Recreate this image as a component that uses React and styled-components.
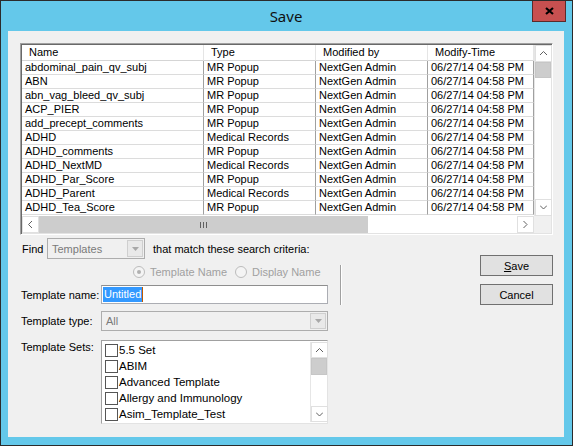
import { Fragment } from 'react';
import styled, { createGlobalStyle } from 'styled-components';

const GlobalStyle = createGlobalStyle`
  html, body {
    margin: 0;
    padding: 0;
    overflow: hidden;
    background: #fff;
  }
  * {
    box-sizing: border-box;
  }
`;

const Window = styled.div`
  width: 573px;
  height: 446px;
  border: 1px solid #2b2b2b;
  background: #64c8ea;
  display: flex;
  flex-direction: column;
  padding: 0 8px 8px 7px;
  font-family: 'Liberation Sans', Arial, sans-serif;
  font-size: 11px;
  color: #000;
`;

const TitleBar = styled.div`
  position: relative;
  height: 30px;
  display: flex;
  align-items: center;
  justify-content: center;
  padding-bottom: 1px;
  font-family: 'Noto Sans', sans-serif;
  font-size: 15px;
  color: #111;
`;

const CloseButton = styled.div`
  position: absolute;
  top: 0;
  right: -2px;
  width: 34px;
  height: 21px;
  background: #c75050;
  border: 1px solid #5b2a2a;
  border-top: none;
  display: flex;
  align-items: center;
  justify-content: center;
`;

const Body = styled.div`
  flex: 1;
  background: #f0f0f0;
  padding: 12px 11px 0 12px;
  display: flex;
  flex-direction: column;
`;

/* ---------- list view ---------- */

const ListView = styled.div`
  width: 533px;
  border: 1px solid;
  border-color: #a0a0a0 #fff #fff #a0a0a0;
  box-shadow: inset 1px 1px 0 #696969, inset -1px -1px 0 #e3e3e3;
  padding: 1px;
  background: #fff;
  display: grid;
  grid-template-columns: 512px 17px;
  grid-template-rows: 171px 17px;
`;

const Columns = styled.div`
  display: grid;
  grid-template-columns: 182px 112px 112px 106px;
  grid-auto-rows: 14px;
`;

const HeaderRow = styled(Columns)`
  grid-auto-rows: 16px;
`;

const HeaderCell = styled.div`
  padding-left: 7px;
  line-height: 15px;
  border-right: 1px solid #e5e5e5;
  border-bottom: 1px solid #d5d5d5;
  white-space: nowrap;
  overflow: hidden;
`;

const Cell = styled.div`
  padding-left: 3px;
  line-height: 13px;
  border-right: 1px solid #a0a0a0;
  border-bottom: 1px solid #dcdcdc;
  white-space: nowrap;
  overflow: hidden;
`;

const VScroll = styled.div`
  display: flex;
  flex-direction: column;
  background: #fff;
  border-left: 1px solid #e6e6e6;
`;

const ArrowBox = styled.div`
  width: ${(p) => p.$w || 17}px;
  height: ${(p) => p.$h || 17}px;
  flex: none;
  display: flex;
  align-items: center;
  justify-content: center;
  background: #fff;
  border: 1px solid #e0e0e0;
`;

const VThumb = styled.div`
  height: ${(p) => p.$h}px;
  flex: none;
  background: #cdcdcd;
  border: 1px solid #c6c6c6;
`;

const Track = styled.div`
  flex: 1;
  background: #fff;
`;

const HScroll = styled.div`
  display: flex;
  background: #fff;
`;

const HThumb = styled.div`
  width: ${(p) => p.$w}px;
  flex: none;
  background: #cdcdcd;
  display: flex;
  align-items: center;
  justify-content: center;
  gap: 2px;

  span {
    width: 1px;
    height: 6px;
    background: #606060;
  }
`;

const Corner = styled.div`
  background: #f0f0f0;
`;

/* ---------- lower part ---------- */

const Lower = styled.div`
  display: flex;
  margin-top: 3px;
`;

const Form = styled.div`
  width: 308px;
  display: flex;
  flex-direction: column;
`;

const FindRow = styled.div`
  display: flex;
  align-items: center;
  height: 21px;
`;

const FindLabel = styled.span`
  width: 27px;
  padding-left: 2px;
`;

const Combo = styled.div`
  width: ${(p) => p.$w}px;
  height: ${(p) => p.$h}px;
  border: 1px solid #adadad;
  background: #f0f0f0;
  color: #7a7a7a;
  display: flex;
  align-items: center;
  justify-content: space-between;
  padding: 1px 1px 1px 4px;
`;

const DropButton = styled.div`
  width: 16px;
  height: 100%;
  border: 1px solid #cfcfcf;
  background: #e9e9e9;
  display: flex;
  align-items: center;
  justify-content: center;
`;

const Hint = styled.span`
  margin-left: 8px;
`;

const RadioRow = styled.div`
  display: flex;
  align-items: center;
  height: 16px;
  margin-top: 5px;
  padding-left: 113px;
  gap: 8px;
  color: #a0a0a0;
`;

const RadioItem = styled.label`
  display: flex;
  align-items: center;
  gap: 5px;
`;

const RadioDot = styled.span`
  width: 12px;
  height: 12px;
  border-radius: 50%;
  border: 1px solid #bcbcbc;
  background: #f4f4f4;
  display: flex;
  align-items: center;
  justify-content: center;

  &::after {
    content: '';
    width: 4px;
    height: 4px;
    border-radius: 50%;
    background: ${(p) => (p.$checked ? '#b0b0b0' : 'transparent')};
  }
`;

const Fields = styled.div`
  display: grid;
  grid-template-columns: 81px 227px;
  margin-top: 5px;
`;

const FieldLabel = styled.div`
  padding-left: 1px;
  margin-top: ${(p) => p.$mt || 0}px;
  display: flex;
  align-items: ${(p) => (p.$top ? 'flex-start' : 'center')};
  padding-top: ${(p) => (p.$top ? 1 : 0)}px;
`;

const TextInput = styled.div`
  height: 19px;
  background: #fff;
  border: 1px solid #abadb3;
  border-top-color: #8e8e8e;
  display: flex;
  align-items: center;
  padding-left: 1px;
`;

const Selected = styled.span`
  background: #3399ff;
  color: #fff;
  line-height: 15px;
  padding: 0 1px;
  border-right: 1px solid #c25a00;
`;

const FieldSlot = styled.div`
  margin-top: ${(p) => p.$mt || 0}px;
`;

const SetsBox = styled.div`
  height: 84px;
  border: 1px solid #a0a0a0;
  border-right-color: #e3e3e3;
  border-bottom-color: #e3e3e3;
  background: #fff;
  display: grid;
  grid-template-columns: 1fr 17px;
  padding: 1px 0 1px 1px;
`;

const SetItems = styled.div`
  display: flex;
  flex-direction: column;
`;

const SetItem = styled.label`
  height: 16px;
  display: flex;
  align-items: center;
  padding-left: 2px;
  gap: 1px;
  font-size: 11.5px;
  white-space: nowrap;
`;

const CheckBox = styled.span`
  width: 13px;
  height: 13px;
  flex: none;
  border: 1px solid #555;
  background: #fff;
`;

const Divider = styled.div`
  width: 2px;
  height: 40px;
  margin: 27px 0 0 12px;
  border-left: 1px solid #a0a0a0;
  border-right: 1px solid #fff;
`;

const Buttons = styled.div`
  margin: 17px 0 0 auto;
  display: flex;
  flex-direction: column;
  gap: 8px;
`;

const Button = styled.button`
  width: 73px;
  height: 21px;
  padding: 0;
  border: 1px solid #707070;
  background: #e1e1e1;
  font-family: 'Liberation Sans', Arial, sans-serif;
  font-size: 11px;
  color: #000;

  u {
    text-decoration: underline;
  }
`;

/* ---------- icons ---------- */

const Chevron = ({ dir }) => {
  const pts = {
    up: '0,4 3.5,0.5 7,4',
    down: '0,0.5 3.5,4 7,0.5',
    left: '4,0 0.5,3.5 4,7',
    right: '0.5,0 4,3.5 0.5,7',
  }[dir];
  const horiz = dir === 'up' || dir === 'down';
  return (
    <svg width={horiz ? 7 : 5} height={horiz ? 5 : 7} viewBox={horiz ? '0 0 7 5' : '0 0 5 7'}>
      <polyline points={pts} fill="none" stroke="#606060" strokeWidth="1" />
    </svg>
  );
};

const DownTriangle = () => (
  <svg width="7" height="4" viewBox="0 0 7 4">
    <polygon points="0,0 7,0 3.5,4" fill="#a8a8a8" />
  </svg>
);

const CloseGlyph = () => (
  <svg width="9" height="8" viewBox="0 0 9 8">
    <path d="M1 1 L8 7 M8 1 L1 7" stroke="#000" strokeWidth="2.2" />
  </svg>
);

const templates = [
  ['abdominal_pain_qv_subj', 'MR Popup'],
  ['ABN', 'MR Popup'],
  ['abn_vag_bleed_qv_subj', 'MR Popup'],
  ['ACP_PIER', 'MR Popup'],
  ['add_precept_comments', 'MR Popup'],
  ['ADHD', 'Medical Records'],
  ['ADHD_comments', 'MR Popup'],
  ['ADHD_NextMD', 'Medical Records'],
  ['ADHD_Par_Score', 'MR Popup'],
  ['ADHD_Parent', 'Medical Records'],
  ['ADHD_Tea_Score', 'MR Popup'],
];

const sets = ['5.5 Set', 'ABIM', 'Advanced Template', 'Allergy and Immunology', 'Asim_Template_Test'];

const App = () => {
  return (
    <>
      <GlobalStyle />
      <Window>
        <TitleBar>
          Save
          <CloseButton>
            <CloseGlyph />
          </CloseButton>
        </TitleBar>
        <Body>
          <ListView>
            <div>
              <HeaderRow>
                <HeaderCell>Name</HeaderCell>
                <HeaderCell>Type</HeaderCell>
                <HeaderCell>Modified by</HeaderCell>
                <HeaderCell>Modify-Time</HeaderCell>
              </HeaderRow>
              <Columns>
                {templates.map(([name, type]) => (
                  <Fragment key={name}>
                    <Cell>{name}</Cell>
                    <Cell>{type}</Cell>
                    <Cell>NextGen Admin</Cell>
                    <Cell>06/27/14 04:58 PM</Cell>
                  </Fragment>
                ))}
              </Columns>
            </div>
            <VScroll>
              <ArrowBox>
                <Chevron dir="up" />
              </ArrowBox>
              <VThumb $h={16} />
              <Track />
              <ArrowBox>
                <Chevron dir="down" />
              </ArrowBox>
            </VScroll>
            <HScroll>
              <ArrowBox>
                <Chevron dir="left" />
              </ArrowBox>
              <HThumb $w={329}>
                <span />
                <span />
                <span />
              </HThumb>
              <Track />
              <ArrowBox>
                <Chevron dir="right" />
              </ArrowBox>
            </HScroll>
            <Corner />
          </ListView>

          <Lower>
            <Form>
              <FindRow>
                <FindLabel>Find</FindLabel>
                <Combo $w={98} $h={21}>
                  Templates
                  <DropButton>
                    <DownTriangle />
                  </DropButton>
                </Combo>
                <Hint>that match these search criteria:</Hint>
              </FindRow>
              <RadioRow>
                <RadioItem>
                  <RadioDot $checked />
                  Template Name
                </RadioItem>
                <RadioItem>
                  <RadioDot />
                  Display Name
                </RadioItem>
              </RadioRow>
              <Fields>
                <FieldLabel>Template name:</FieldLabel>
                <TextInput>
                  <Selected>Untitled</Selected>
                </TextInput>
                <FieldLabel $mt={7}>Template type:</FieldLabel>
                <FieldSlot $mt={7}>
                  <Combo $w={227} $h={20}>
                    All
                    <DropButton>
                      <DownTriangle />
                    </DropButton>
                  </Combo>
                </FieldSlot>
                <FieldLabel $mt={9} $top>
                  Template Sets:
                </FieldLabel>
                <FieldSlot $mt={9}>
                  <SetsBox>
                    <SetItems>
                      {sets.map((s) => (
                        <SetItem key={s}>
                          <CheckBox />
                          {s}
                        </SetItem>
                      ))}
                    </SetItems>
                    <VScroll>
                      <ArrowBox $h={16}>
                        <Chevron dir="up" />
                      </ArrowBox>
                      <VThumb $h={17} />
                      <Track />
                      <ArrowBox $h={16}>
                        <Chevron dir="down" />
                      </ArrowBox>
                    </VScroll>
                  </SetsBox>
                </FieldSlot>
              </Fields>
            </Form>
            <Divider />
            <Buttons>
              <Button>
                <u>S</u>ave
              </Button>
              <Button>Cancel</Button>
            </Buttons>
          </Lower>
        </Body>
      </Window>
    </>
  );
};

export default App;
